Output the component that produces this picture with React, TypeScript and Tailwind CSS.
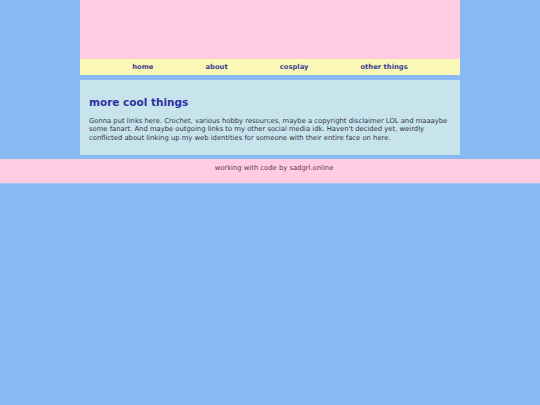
export default function App() {
  const font = { fontFamily: '"DejaVu Sans", Verdana, sans-serif' };
  return (
    <div className="min-h-[405px] w-full bg-[#88b9f2]" style={font}>
      <div className="mx-auto w-[380px]">
        <div className="h-[59px] bg-[#ffcce1]" />
        <nav className="flex h-[16px] items-center justify-center gap-[52px] bg-[#fbf8b7] pt-[1px] text-[6.8px] font-bold text-[#3d3d8f]">
          <span>home</span>
          <span>about</span>
          <span>cosplay</span>
          <span>other things</span>
        </nav>
        <div className="mt-[5px] h-[75px] bg-[#c7e4ec] pl-[9px] pr-[6px] pt-[16px]">
          <h1 className="text-[10.5px] font-bold leading-[13px] text-[#3030a4]">more cool things</h1>
          <p className="mt-[8px] text-[6.8px] leading-[8.4px] text-[#333344]">
            Gonna put links here. Crochet, various hobby resources, maybe a copyright disclaimer LOL and maaaybe some fanart. And maybe outgoing links to my other social media idk. Haven't decided yet, weirdly conflicted about linking up my web identities for someone with their entire face on here.
          </p>
        </div>
      </div>
      <footer className="mt-[4px] flex h-[25px] justify-center border-b border-[#a9c3f1] bg-[#ffcce1] pl-[8px] pt-[4px] text-[6.8px] text-[#5a3a55]">
        working with code by sadgrl.online
      </footer>
    </div>
  );
}
